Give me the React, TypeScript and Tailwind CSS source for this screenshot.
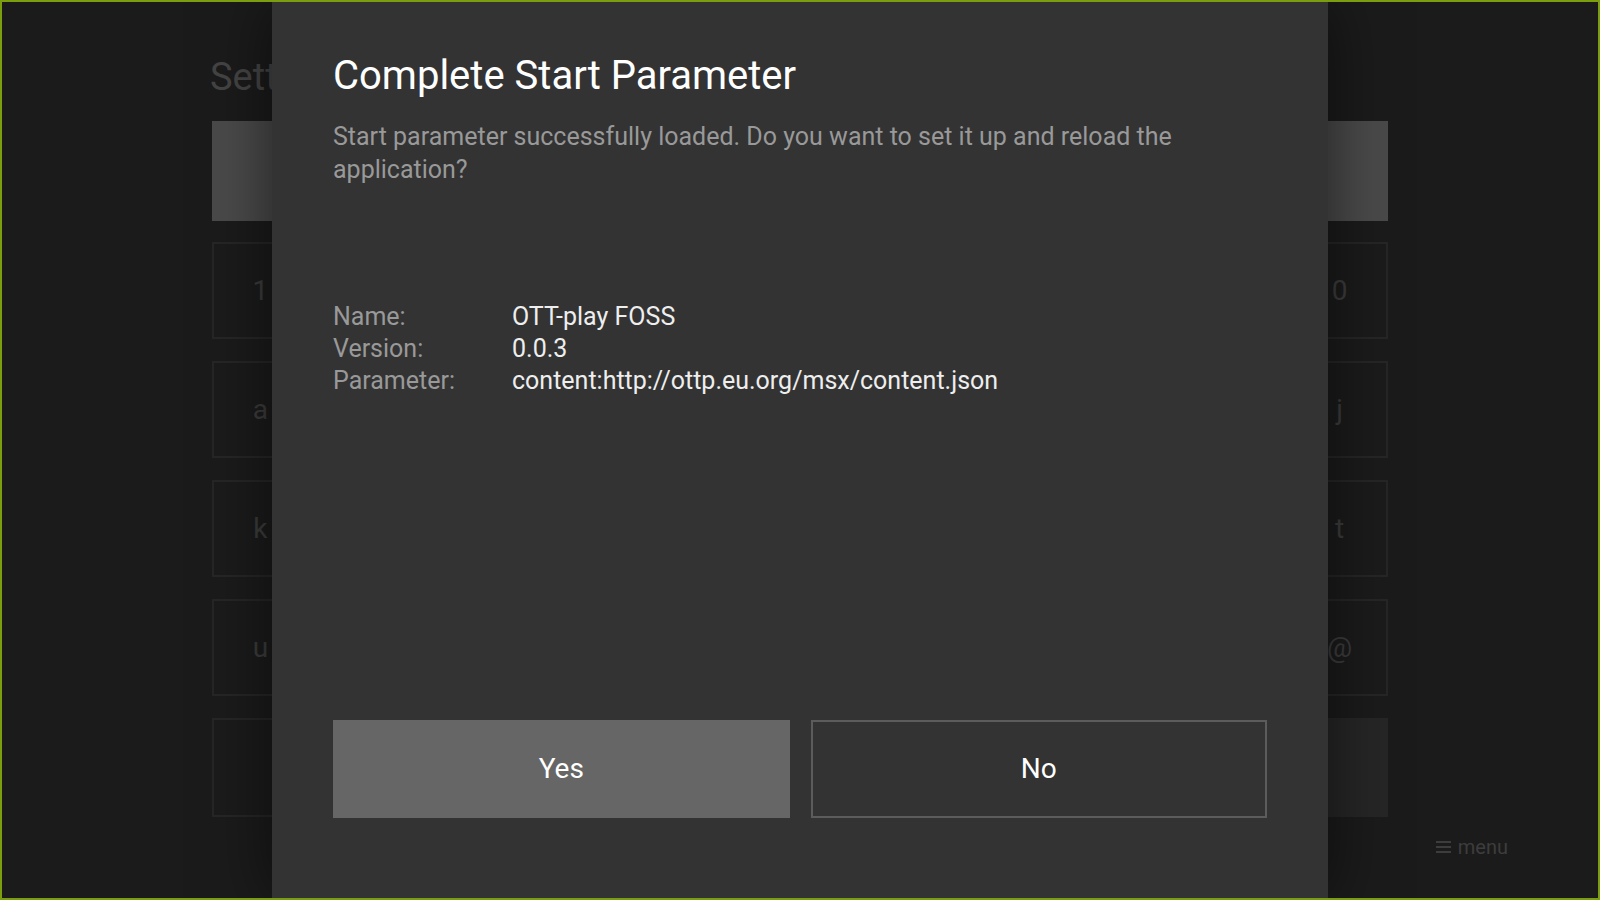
import React from 'react';

const rows: string[][] = [
  ['1', '2', '3', '4', '5', '6', '7', '8', '9', '0'],
  ['a', 'b', 'c', 'd', 'e', 'f', 'g', 'h', 'i', 'j'],
  ['k', 'l', 'm', 'n', 'o', 'p', 'q', 'r', 's', 't'],
  ['u', 'v', 'w', 'x', 'y', 'z', '.', '-', '_', '@'],
];

const info = [
  { label: 'Name:', value: 'OTT-play FOSS' },
  { label: 'Version:', value: '0.0.3' },
  { label: 'Parameter:', value: 'content:http://ottp.eu.org/msx/content.json' },
];

const Background: React.FC = () => (
  <div className="w-[1176px] mx-auto flex flex-col">
    <h1 className="text-[38px] leading-[46px] text-[#444444] mt-[52px] -ml-[2px]">Settings</h1>
    <div className="h-[100px] bg-[#4a4a4a] mt-[21px]" />
    <div className="flex flex-col gap-[22px] mt-[21px]">
      {rows.map((r, i) => (
        <div key={i} className="grid grid-cols-10 gap-[23px]">
          {r.map(k => (
            <div key={k} className="h-[97px] border-2 border-[#262626] flex items-center justify-center text-[28px] text-[#3c3c3c] pt-[1px]">
              {k}
            </div>
          ))}
        </div>
      ))}
      <div className="grid grid-cols-10 gap-[23px]">
        <div className="col-span-3 h-[99px] border-2 border-[#262626]" />
        <div className="col-span-4 h-[99px] border-2 border-[#262626]" />
        <div className="col-span-3 h-[99px] bg-[#262626]" />
      </div>
    </div>
  </div>
);

const App: React.FC = () => {
  return (
    <div
      className="w-[1600px] h-[900px] border-2 border-[#7b9e0e] bg-[#1b1b1b] overflow-hidden"
      style={{ fontFamily: 'Roboto, "Noto Sans", sans-serif' }}
    >
      <div className="relative w-full h-full">
        <Background />
        <div className="absolute right-[90px] bottom-[36px] flex items-center gap-[7px] text-[20px] text-[#3d3d3d]">
          <span className="flex flex-col gap-[3px]">
            <span className="block w-[15px] h-[2px] bg-[#3d3d3d]" />
            <span className="block w-[15px] h-[2px] bg-[#3d3d3d]" />
            <span className="block w-[15px] h-[2px] bg-[#3d3d3d]" />
          </span>
          menu
        </div>

        <div className="absolute inset-0 flex justify-center">
          <div className="w-[1056px] h-full bg-[#333333] shadow-[0_0_60px_rgba(0,0,0,0.55)] flex flex-col px-[61px] pb-[80px]">
            <h2 className="text-[40px] leading-[46px] text-white mt-[51px]">Complete Start Parameter</h2>
            <p className="text-[25px] leading-[33px] text-[#999999] mt-[21px]">
              Start parameter successfully loaded. Do you want to set it up and reload the application?
            </p>
            <div className="mt-[115px] flex flex-col text-[25px] leading-[32px]">
              {info.map(i => (
                <div key={i.label} className="flex">
                  <span className="w-[179px] shrink-0 text-[#999999]">{i.label}</span>
                  <span className="text-[#eeeeee]">{i.value}</span>
                </div>
              ))}
            </div>
            <div className="mt-auto grid grid-cols-2 gap-[21px]">
              <button className="h-[98px] bg-[#666666] text-white text-[28px]">Yes</button>
              <button className="h-[98px] border-2 border-[#5c5c5c] bg-[#333333] text-white text-[28px]">No</button>
            </div>
          </div>
        </div>
      </div>
    </div>
  );
};

export default App;
